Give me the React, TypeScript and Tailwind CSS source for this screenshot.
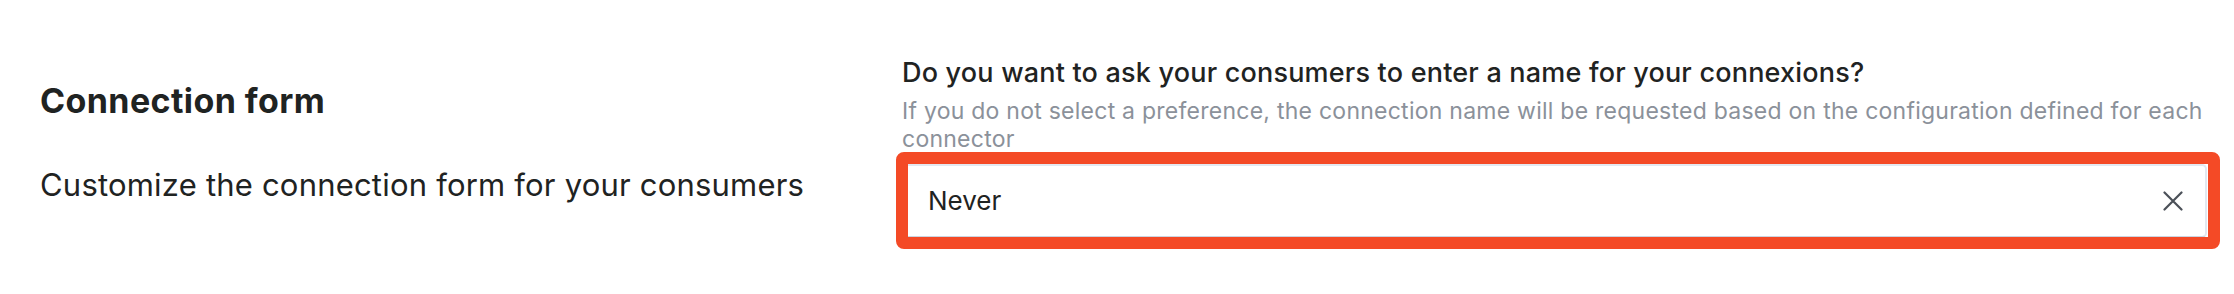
import React from "react";

export default function App() {
  const [value, setValue] = React.useState<string | null>("Never");

  return (
    <div
      className="w-[2234px] h-[294px] bg-white flex items-start pl-[40px] pr-[27px] text-[#1f2322]"
      style={{ fontFamily: "Inter, 'Noto Sans', sans-serif" }}
    >
      <div className="w-[862px] shrink-0 flex flex-col pt-[81px]">
        <h2 className="text-[34px] leading-[40px] font-bold tracking-[0.4px]">Connection form</h2>
        <p className="mt-[44px] text-[31px] leading-[40px] tracking-[0.2px]">
          Customize the connection form for your consumers
        </p>
      </div>

      <div className="flex-1 flex flex-col pt-[55px]">
        <p className="text-[27px] leading-[36px] font-medium tracking-[0.2px]">
          Do you want to ask your consumers to enter a name for your connexions?
        </p>
        <p className="mt-[6px] text-[23px] leading-[28px] tracking-[0.25px] text-[#8b919a]">
          If you do not select a preference, the connection name will be requested based on the
          configuration defined for each connector
        </p>

        <div className="relative mt-[11px]">
          <div className="h-[74px] rounded-[5px] border-2 border-[#e2e8f0] border-b-[#cbd5e1] bg-white flex items-center pl-[24px] pr-[20px]">
            <span className="flex-1 text-[26px] leading-[36px]">{value ?? ""}</span>
            <button
              onClick={() => setValue(null)}
              className="w-[24px] h-[24px] flex items-center justify-center text-[#4b5058]"
            >
              <svg width="20" height="20" viewBox="0 0 20 20" fill="none">
                <path d="M1.5 1.5L18.5 18.5M18.5 1.5L1.5 18.5" stroke="currentColor" strokeWidth="2.2" strokeLinecap="round" />
              </svg>
            </button>
          </div>
          <div className="absolute top-[-12px] bottom-[-11px] left-[-6px] right-[-13px] border-[12px] border-[#f44a26] rounded-[8px] pointer-events-none" />
        </div>
      </div>
    </div>
  );
}
